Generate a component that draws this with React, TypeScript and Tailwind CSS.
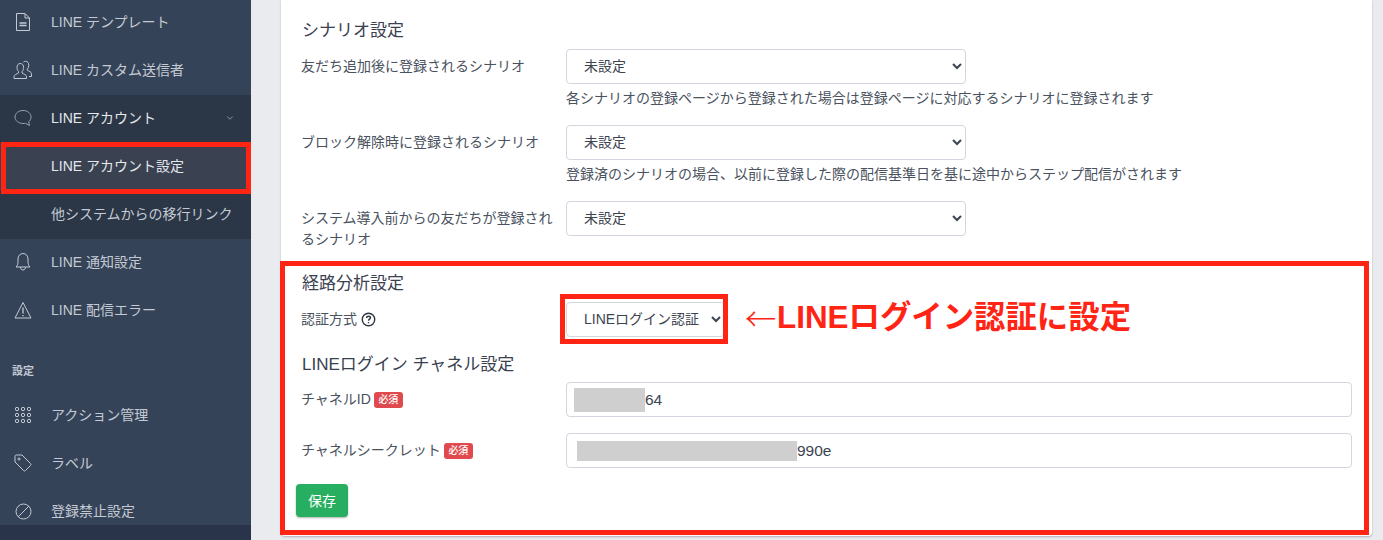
import { ChevronDown } from "lucide-react";
import type { ReactNode } from "react";

const fontStack = "font-['Liberation_Sans','Noto_Sans_CJK_JP',sans-serif]";

function FileIcon() {
  return (
    <svg width="18" height="20" viewBox="0 0 18 20" fill="none" stroke="currentColor" strokeWidth="1">
      <path d="M2.500 1.500h8.500l4.500 4.500v12.500h-13z" />
      <path d="M11 1.500v4.500h4.500" />
      <path d="M5.500 11h7M5.500 13.500h7" strokeWidth="1.400" />
    </svg>
  );
}

function UsersIcon() {
  return (
    <svg width="20" height="20" viewBox="0 0 20 20" fill="none" stroke="currentColor" strokeWidth="1">
      <path d="M1 18.500v-2c0-1.700 3-2.500 4.500-3.500v-1.500c-1-1-1.500-2.500-1.500-4 0-2.500 1.300-4 3.300-4s3.300 1.500 3.300 4c0 1.500-.5 3-1.500 4V13c1.500 1 4.400 1.800 4.400 3.500v2z" />
      <path d="M10.500 2c.5-.5 1.200-.7 2-.7 2 0 3.300 1.500 3.300 4 0 1.500-.5 3-1.500 4v1c1.500.8 4.200 1.600 4.200 3.400v2.800h-2.500" />
    </svg>
  );
}

function ChatIcon() {
  return (
    <svg width="18" height="18" viewBox="0 0 18 18" fill="none" stroke="currentColor" strokeWidth="1">
      <path d="M9 1.500c4.500 0 8 2.800 8 6.500 0 2-1 3.700-2.300 4.800l.8 3.700-4-2.200c-.8.200-1.600.2-2.500.2-4.500 0-8-3-8-6.500s3.500-6.500 8-6.500z" />
    </svg>
  );
}

function BellIcon() {
  return (
    <svg width="16" height="20" viewBox="0 0 16 20" fill="none" stroke="currentColor" strokeWidth="1">
      <path d="M1 15c1.500-1.500 2-3 2-5.500V7c0-3 2-5.500 5-5.500S13 4 13 7v2.500c0 2.500.5 4 2 5.500z" />
      <path d="M5.500 15c0 1.800 1 3 2.500 3s2.500-1.200 2.500-3" />
    </svg>
  );
}

function AlertIcon() {
  return (
    <svg width="18" height="18" viewBox="0 0 18 18" fill="none" stroke="currentColor" strokeWidth="1">
      <path d="M9 1.500 17 17H1z" />
      <path d="M9 6.500v6M9 14v1.200" strokeWidth="1.300" />
    </svg>
  );
}

function DotsIcon() {
  const points = [1, 2, 3].flatMap((y) => [1, 2, 3].map((x) => [x, y]));
  return (
    <svg width="16" height="16" viewBox="0 0 16 16" fill="none" stroke="currentColor" strokeWidth="1">
      {points.map(([x, y]) => (
        <circle key={`${x}-${y}`} cx={x * 6 - 4} cy={y * 6 - 4} r="1.700" />
      ))}
    </svg>
  );
}

function TagIcon() {
  return (
    <svg width="18" height="18" viewBox="0 0 18 18" fill="none" stroke="currentColor" strokeWidth="1">
      <path d="M1 2.500C1 1.500 1.500 1 2.500 1h5.500l8.500 8.500c.7.700.7 1.300 0 2L11.500 16.500c-.7.700-1.300.7-2 0L1 8z" />
      <circle cx="5" cy="5" r="1" />
    </svg>
  );
}

function BanIcon() {
  return (
    <svg width="17" height="17" viewBox="0 0 17 17" fill="none" stroke="currentColor" strokeWidth="1">
      <circle cx="8.500" cy="8.500" r="7.500" />
      <path d="M3.200 13.800 13.800 3.200" />
    </svg>
  );
}

function NavItem({ icon, label }: { icon?: ReactNode; label: string }) {
  return (
    <div className="flex h-12 items-center pb-[2px] text-sm text-[#c4cad3]">
      <span className="flex w-[51px] justify-center pr-[5px]">{icon}</span>
      <span>{label}</span>
    </div>
  );
}

function Sidebar() {
  return (
    <aside className="relative h-[540px] w-[251px] shrink-0 overflow-hidden bg-[#354358] text-[#9aa3b0]">
      <div className="-mt-px">
        <NavItem icon={<FileIcon />} label="LINE テンプレート" />
        <NavItem icon={<UsersIcon />} label="LINE カスタム送信者" />
        <div className="bg-[#2b3647]">
          <div className="flex h-12 items-center pb-[2px] text-sm text-[#e4e7eb]">
            <span className="flex w-[51px] justify-center pr-[5px] text-[#9aa3b0]">
              <ChatIcon />
            </span>
            <span className="flex-1">LINE アカウント</span>
            <ChevronDown size={10} strokeWidth={2} className="mr-4 text-[#9aa3b0]" />
          </div>
          <div className="flex h-12 items-center bg-[#3a4252] pb-[2px] pl-[51px] text-sm text-[#e4e7eb]">LINE アカウント設定</div>
          <div className="flex h-12 items-center pb-[2px] pl-[51px] text-sm text-[#c4cad3]">他システムからの移行リンク</div>
        </div>
        <NavItem icon={<BellIcon />} label="LINE 通知設定" />
        <NavItem icon={<AlertIcon />} label="LINE 配信エラー" />
        <div className="pl-3 pt-[28px] text-[11px] font-bold leading-4 text-[#c4cad3]">設定</div>
        <div className="mt-[13px]">
          <NavItem icon={<DotsIcon />} label="アクション管理" />
          <NavItem icon={<TagIcon />} label="ラベル" />
          <NavItem icon={<BanIcon />} label="登録禁止設定" />
        </div>
      </div>
      <div className="absolute bottom-0 left-0 h-[15px] w-full bg-[#29344a]" />
    </aside>
  );
}

function ScenarioSelect({ value }: { value: string }) {
  return (
    <select
      defaultValue={value}
      className="h-[35px] w-full rounded border border-[#d2d6de] bg-white pb-px pl-[13px] pr-1 text-sm text-[#3d4450]"
    >
      <option>{value}</option>
    </select>
  );
}

function Required() {
  return (
    <span className="ml-[3px] inline-block rounded-[3px] bg-[#e04a4f] px-[4.500px] py-[2px] align-middle text-[10px] font-medium leading-[12px] text-white">
      必須
    </span>
  );
}

function Row({ label, children }: { label: ReactNode; children: ReactNode }) {
  return (
    <div className="flex">
      <div className="w-[285px] shrink-0 pl-[20px] pr-[12px] pt-[7px] text-sm leading-[21px] text-[#4a5260]">{label}</div>
      <div className="w-[786px] shrink-0">{children}</div>
    </div>
  );
}

function Help({ children }: { children: ReactNode }) {
  return <p className="mt-[4px] text-sm leading-[21px] text-[#4a5260]">{children}</p>;
}

function Heading({ children }: { children: ReactNode }) {
  return <h3 className="pl-[21px] text-[17px] leading-6 text-[#3a4150]">{children}</h3>;
}

function KeyInput({ value, maskClass }: { value: string; maskClass: string }) {
  return (
    <div className="relative flex h-[35px] items-center rounded border border-[#d2d6de] bg-white text-[15.500px] text-[#3d4450]">
      <span className={maskClass} />
      <span className="pt-px">{value}</span>
    </div>
  );
}

export default function App() {
  return (
    <div className={`relative flex h-[540px] w-[1383px] overflow-hidden bg-[#e9ebee] ${fontStack}`}>
      <Sidebar />
      <main className="pl-[30px]">
        <div className="h-[536px] w-[1091px] rounded-b bg-white pt-[19px] shadow-[0_1px_2px_rgba(60,70,90,0.35)]">
          <Heading>シナリオ設定</Heading>
          <div className="mt-[6px]">
            <Row label="友だち追加後に登録されるシナリオ">
              <div className="w-[400px]">
                <ScenarioSelect value="未設定" />
              </div>
              <Help>各シナリオの登録ページから登録された場合は登録ページに対応するシナリオに登録されます</Help>
            </Row>
          </div>
          <div className="mt-[16px]">
            <Row label="ブロック解除時に登録されるシナリオ">
              <div className="w-[400px]">
                <ScenarioSelect value="未設定" />
              </div>
              <Help>登録済のシナリオの場合、以前に登録した際の配信基準日を基に途中からステップ配信がされます</Help>
            </Row>
          </div>
          <div className="mt-[16px]">
            <Row label="システム導入前からの友だちが登録されるシナリオ">
              <div className="w-[400px]">
                <ScenarioSelect value="未設定" />
              </div>
            </Row>
          </div>
          <div className="mt-[22px]">
            <Heading>経路分析設定</Heading>
          </div>
          <div className="mt-[6px]">
            <Row
              label={
                <span className="flex items-center gap-[4px]">
                  認証方式
                  <svg width="15" height="15" viewBox="0 0 14 14" fill="none" stroke="#2f3642" strokeWidth="1.300">
                    <circle cx="7" cy="7" r="5.800" />
                    <path d="M5.200 5.500c0-1 .8-1.600 1.800-1.600s1.800.6 1.800 1.500c0 1.300-1.800 1.300-1.800 2.800M7 9.400v1" />
                  </svg>
                </span>
              }
            >
              <div className="w-[159px]">
                <ScenarioSelect value="LINEログイン認証" />
              </div>
            </Row>
          </div>
          <div className="mt-[16px]">
            <Heading>LINEログイン チャネル設定</Heading>
          </div>
          <div className="mt-[5px]">
            <Row
              label={
                <>
                  チャネルID
                  <Required />
                </>
              }
            >
              <KeyInput value="64" maskClass="ml-[7px] h-6 w-[71px] bg-[#cfcfcf]" />
            </Row>
          </div>
          <div className="mt-[16px]">
            <Row
              label={
                <>
                  チャネルシークレット
                  <Required />
                </>
              }
            >
              <KeyInput value="990e" maskClass="ml-[10px] h-5 w-[220px] bg-[#cfcfcf]" />
            </Row>
          </div>
          <button className="ml-[15px] mt-[16px] h-[33px] w-[52px] rounded bg-[#27ae60] text-sm text-white shadow-[0_1px_2px_rgba(0,0,0,0.3)]">
            保存
          </button>
        </div>
      </main>

      {/* annotation overlays on the screenshot */}
      <div className="absolute left-[1px] top-[142px] h-[52px] w-[250px] border-[5px] border-[#ff2414]" />
      <div className="absolute left-[280px] top-[261px] h-[274px] w-[1089px] border-[5px] border-[#ff2414]" />
      <div className="absolute left-[560px] top-[294px] h-[50px] w-[168px] border-[5px] border-[#ff2414]" />
      <div className="absolute left-[745px] top-[298px] flex items-center text-[31.400px] font-bold leading-10 text-[#ff2414]">
        <span className="w-[32px] font-['Noto_Sans_CJK_JP',sans-serif] font-light">←</span>
        <span>LINEログイン認証に設定</span>
      </div>
    </div>
  );
}
